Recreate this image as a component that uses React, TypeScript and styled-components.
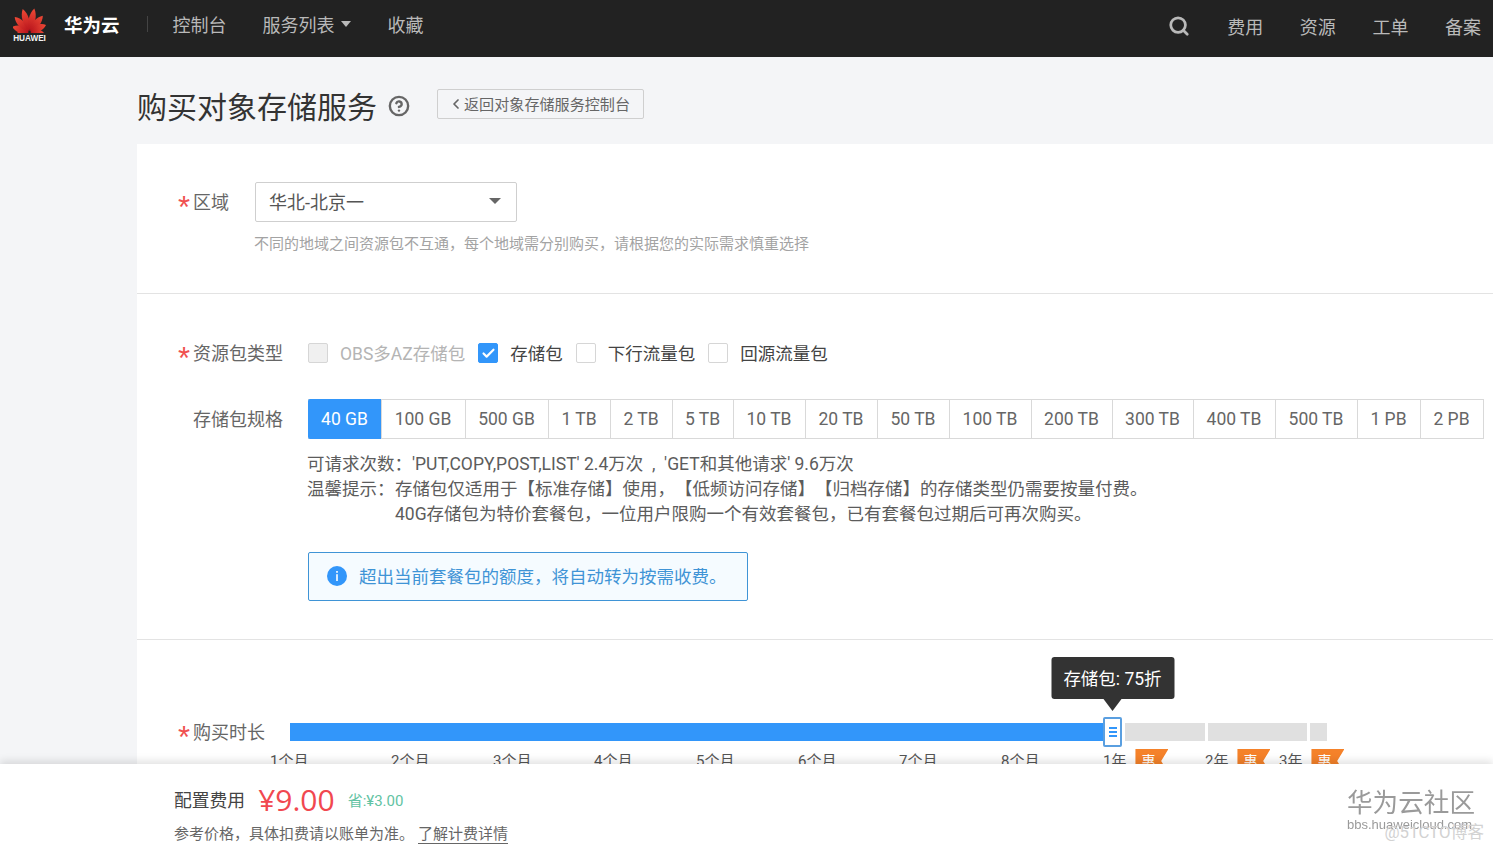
import React from 'react';
import styled, { createGlobalStyle } from 'styled-components';
import { Search, ChevronLeft, CircleHelp, Check } from 'lucide-react';

const GlobalStyle = createGlobalStyle`
    html, body {
        margin: 0;
        padding: 0;
        background: #f4f5f7;
        font-family: Roboto, "Noto Sans CJK SC", sans-serif;
        text-spacing-trim: space-all;
    }
    * {
        box-sizing: border-box;
    }
`;

const Page = styled.div`
    position: relative;
    display: flex;
    flex-direction: column;
    height: 100vh;
    overflow: hidden;
`;

const Header = styled.header`
    display: flex;
    flex: none;
    align-items: center;
    height: 57px;
    padding: 0 12px 10px 13px;
    background: #222222;
    color: #b9b9b9;
    font-size: 18px;
`;

const LogoBox = styled.div`
    display: flex;
    flex-direction: column;
    align-items: center;
    width: 33px;
    margin-top: 4px;
`;

const LogoText = styled.span`
    margin-top: 1px;
    color: #f2f2f2;
    font-family: "Liberation Sans", sans-serif;
    font-size: 8.2px;
    font-weight: 700;
    line-height: 10px;
`;

const Brand = styled.span`
    margin-left: 18px;
    color: #ffffff;
    font-size: 18.5px;
    font-weight: 700;
`;

const NavDivider = styled.span`
    width: 1px;
    height: 16px;
    margin: 0 25px 0 27px;
    background: #444444;
`;

const NavLink = styled.span<{ $gap?: number }>`
    display: flex;
    align-items: center;
    margin-right: ${(props) => props.$gap ?? 0}px;
    font-size: 18px;
`;

const Caret = styled.span`
    width: 0;
    height: 0;
    margin-left: 6px;
    border-top: 6px solid #b9b9b9;
    border-left: 5px solid transparent;
    border-right: 5px solid transparent;
`;

const HeaderRight = styled.div`
    display: flex;
    align-items: center;
    gap: 36.6px;
    margin-left: auto;
    margin-top: 4px;

    > svg {
        margin-right: 1px;
    }
`;

const TitleRow = styled.div`
    display: flex;
    flex: none;
    align-items: center;
    height: 87px;
    padding: 7px 0 0 137px;
`;

const Title = styled.h1`
    margin: 2px 0 0;
    color: #333333;
    font-size: 30px;
    font-weight: 400;
`;

const HelpIcon = styled.span`
    display: flex;
    margin: 4px 27px 0 11px;
    color: #666666;
`;

const BackButton = styled.div`
    display: flex;
    align-items: center;
    width: 207px;
    height: 30px;
    padding: 0 0 3px 10px;
    border: 1px solid #cfcfcf;
    border-radius: 2px;
    color: #666666;
    font-size: 15.1px;

    > svg {
        margin-top: 2px;
    }
`;

const Card = styled.main`
    flex: 1;
    margin-left: 137px;
    background: #ffffff;
`;

const Section = styled.section<{ $height: number; $top: number }>`
    height: ${(props) => props.$height}px;
    padding: ${(props) => props.$top}px 0 0 41px;
    border-bottom: 1px solid #e3e3e3;

    &:last-child {
        border-bottom: none;
    }
`;

const FormRow = styled.div<{ $mb?: number }>`
    display: flex;
    align-items: center;
    margin-bottom: ${(props) => props.$mb ?? 0}px;
`;

const FieldLabel = styled.div<{ $width: number }>`
    display: flex;
    flex: none;
    align-items: center;
    width: ${(props) => props.$width}px;
    height: 40px;
    padding-top: 2px;
    color: #666666;
    font-size: 18px;
    line-height: 40px;
`;

const Star = styled.span<{ $hidden?: boolean }>`
    flex: none;
    width: 15px;
    color: #f0514f;
    font-family: "Liberation Sans", sans-serif;
    font-size: 31px;
    line-height: 1;
    transform: translateY(4px);
    visibility: ${(props) => (props.$hidden ? 'hidden' : 'visible')};
`;

const Select = styled.div`
    display: flex;
    align-items: center;
    justify-content: space-between;
    width: 262px;
    height: 40px;
    padding: 0 15px 2px 13px;
    border: 1px solid #cfcfcf;
    border-radius: 2px;
    color: #555555;
    font-size: 18px;
`;

const SelectCaret = styled.span`
    width: 0;
    height: 0;
    border-top: 6px solid #666666;
    border-left: 6px solid transparent;
    border-right: 6px solid transparent;
`;

const Hint = styled.div`
    margin: 12px 0 0 76px;
    color: #a3a3a3;
    font-size: 15px;
    line-height: 20px;
`;

const CheckGroup = styled.div`
    display: flex;
    align-items: center;
`;

const CheckItem = styled.label<{ $disabled?: boolean }>`
    display: flex;
    align-items: center;
    gap: 12px;
    margin-right: 13px;
    color: ${(props) => (props.$disabled ? '#b4b4b4' : '#444444')};
    font-size: 17.5px;
    line-height: 20px;
`;

const CheckText = styled.span`
    margin-top: 2px;
`;

const CheckBox = styled.span<{ $checked?: boolean; $disabled?: boolean }>`
    display: flex;
    align-items: center;
    justify-content: center;
    width: 20px;
    height: 20px;
    border: 1px solid ${(props) => (props.$checked ? '#3296fa' : '#d6d6d6')};
    border-radius: 2px;
    background: ${(props) => (props.$checked ? '#3296fa' : props.$disabled ? '#f0f0f0' : '#ffffff')};
    color: #ffffff;
`;

const SpecGroup = styled.div`
    display: grid;
    grid-template-columns: 73px 84px 83px 62px 62px 61px 72px 72px 72px 82px 81px 81px 82px 82px 63px 63px;
    flex: none;
    height: 40px;
    border: 1px solid #d9d9d9;
    border-left: none;
`;

const SpecItem = styled.div<{ $active?: boolean }>`
    display: flex;
    align-items: center;
    justify-content: center;
    margin: ${(props) => (props.$active ? '-1px 0' : '0')};
    padding-right: ${(props) => (props.$active ? 0 : 1)}px;
    border-left: ${(props) => (props.$active ? 'none' : '1px solid #d9d9d9')};
    border-radius: ${(props) => (props.$active ? '2px 0 0 2px' : '0')};
    background: ${(props) => (props.$active ? '#3296fa' : '#ffffff')};
    color: ${(props) => (props.$active ? '#ffffff' : '#666666')};
    font-size: 17.5px;
`;

const InfoText = styled.div`
    margin: 13px 0 0 129px;
    color: #5c5c5c;
    font-size: 17.5px;
    line-height: 25px;
`;

const InfoLine = styled.div`
    display: flex;
    white-space: pre;
`;

const InfoTag = styled.span`
    flex: none;
    width: 88px;
`;

const Alert = styled.div`
    display: flex;
    align-items: center;
    gap: 12px;
    width: 440px;
    height: 49px;
    margin: 25px 0 0 130px;
    padding: 0 0 2px 18px;
    border: 1px solid #3f94d6;
    border-radius: 2px;
    background: #f5fbff;
    color: #3f94d6;
    font-size: 17.5px;
`;

const SliderRow = styled.div`
    display: flex;
    align-items: center;
    height: 30px;
`;

const SliderBar = styled.div<{ $width: number; $active?: boolean }>`
    width: ${(props) => props.$width}px;
    height: 18px;
    margin-right: ${(props) => (props.$active ? 0 : 3)}px;
    background: ${(props) => (props.$active ? '#3296fa' : '#e0e0e0')};
`;

const Handle = styled.div`
    position: relative;
    display: flex;
    flex-direction: column;
    align-items: center;
    justify-content: center;
    gap: 2.5px;
    width: 19px;
    height: 30px;
    margin-right: 3px;
    border: 2px solid #5a9fe0;
    border-radius: 2px;
    background: #ffffff;
`;

const HandleLine = styled.span`
    width: 8px;
    height: 1.5px;
    background: #3296fa;
`;

const Tooltip = styled.div`
    position: absolute;
    left: 50%;
    bottom: 46px;
    display: flex;
    align-items: center;
    justify-content: center;
    width: 123px;
    height: 42px;
    padding-bottom: 2px;
    transform: translateX(-50%);
    border-radius: 3px;
    background: #333333;
    color: #ffffff;
    font-size: 17.5px;
    white-space: nowrap;

    &::after {
        content: '';
        position: absolute;
        top: 100%;
        left: 50%;
        margin-left: -9px;
        border-top: 12px solid #333333;
        border-left: 9px solid transparent;
        border-right: 9px solid transparent;
    }
`;

const TickRow = styled.div`
    display: flex;
    align-items: flex-start;
    margin: -3px 0 0 92px;
`;

const Tick = styled.div<{ $width: number }>`
    display: flex;
    flex: none;
    width: ${(props) => props.$width}px;
    color: #555555;
    font-size: 15px;
    line-height: 24px;
`;

const SaleBadge = styled.span`
    flex: none;
    width: 33px;
    height: 24px;
    margin: 0 0 0 9px;
    padding-left: 6px;
    background: #f5822a;
    clip-path: polygon(0 0, 100% 0, 78% 50%, 100% 100%, 0 100%);
    color: #ffffff;
    font-size: 14px;
    line-height: 24px;
`;

const Footer = styled.footer`
    position: absolute;
    left: 0;
    right: 0;
    bottom: 0;
    height: 86px;
    padding: 16px 0 0 174px;
    background: #ffffff;
    box-shadow: 0 -3px 8px rgba(0, 0, 0, 0.12);
`;

const PriceRow = styled.div`
    display: flex;
    align-items: center;
    height: 38px;
`;

const PriceLabel = styled.span`
    color: #444444;
    font-size: 17.8px;
`;

const Price = styled.span`
    margin: 0 13px;
    color: #f1484f;
    font-family: "Open Sans", Roboto, sans-serif;
    font-size: 30px;
`;

const Saved = styled.span`
    color: #62c3a3;
    font-size: 15px;
`;

const FootNote = styled.div`
    margin-top: 6px;
    color: #666666;
    font-size: 15px;
    line-height: 20px;
`;

const FootLink = styled.span`
    margin-left: 4px;
    border-bottom: 1px solid #666666;
`;

const Watermark = styled.div`
    position: absolute;
    right: 18px;
    bottom: 18px;
    display: flex;
    flex-direction: column;
    color: #9a9a9a;
    filter: blur(0.4px);
`;

const WatermarkTitle = styled.span`
    font-size: 25.6px;
    line-height: 28px;
`;

const WatermarkUrl = styled.span`
    font-family: "Liberation Sans", sans-serif;
    font-size: 13px;
    line-height: 15px;
`;

const CtoMark = styled.span`
    position: absolute;
    right: 9px;
    bottom: 9px;
    color: #d2d2d2;
    font-size: 16.8px;
    line-height: 18px;
`;

const specs = ['40 GB', '100 GB', '500 GB', '1 TB', '2 TB', '5 TB', '10 TB', '20 TB', '50 TB', '100 TB', '200 TB', '300 TB', '400 TB', '500 TB', '1 PB', '2 PB'];
const months = ['1个月', '2个月', '3个月', '4个月', '5个月', '6个月', '7个月', '8个月'];
const monthWidths = [121, 102, 101, 102, 102, 101, 102, 102];
const petals = [
    { r: -100, l: 15 },
    { r: -70, l: 18 },
    { r: -42, l: 21 },
    { r: -14, l: 24 },
    { r: 14, l: 24 },
    { r: 42, l: 21 },
    { r: 70, l: 18 },
    { r: 100, l: 15 },
];

const HuaweiLogo = () => (
    <svg width="33" height="26" viewBox="-16.5 -25 33 26">
        <defs>
            <linearGradient id="petal" x1="0" y1="1" x2="0" y2="0">
                <stop offset="0" stopColor="#b8141c" />
                <stop offset="1" stopColor="#ee4a36" />
            </linearGradient>
        </defs>
        {petals.map((p) => (
            <path key={p.r} transform={`rotate(${p.r})`} fill="url(#petal)" d={`M0 -1 C-5.2 ${-p.l * 0.35} -5 ${-p.l * 0.75} -1 ${-p.l} C3.6 ${-p.l * 0.75} 4 ${-p.l * 0.35} 0 -1 Z`} />
        ))}
    </svg>
);

const InfoIcon = () => (
    <svg width="20" height="20" viewBox="0 0 20 20">
        <circle cx="10" cy="10" r="10" fill="#3296fa" />
        <rect x="9.2" y="5" width="1.6" height="1.8" fill="#ffffff" />
        <rect x="9.2" y="8.2" width="1.6" height="6.8" fill="#ffffff" />
    </svg>
);

export default function App() {
    return (
        <Page>
            <GlobalStyle />
            <Header>
                <LogoBox>
                    <HuaweiLogo />
                    <LogoText>HUAWEI</LogoText>
                </LogoBox>
                <Brand>华为云</Brand>
                <NavDivider />
                <NavLink $gap={36}>控制台</NavLink>
                <NavLink $gap={37}>
                    服务列表
                    <Caret />
                </NavLink>
                <NavLink>收藏</NavLink>
                <HeaderRight>
                    <Search size={22} strokeWidth={3} color="#b9b9b9" />
                    <NavLink>费用</NavLink>
                    <NavLink>资源</NavLink>
                    <NavLink>工单</NavLink>
                    <NavLink>备案</NavLink>
                </HeaderRight>
            </Header>
            <TitleRow>
                <Title>购买对象存储服务</Title>
                <HelpIcon>
                    <CircleHelp size={22} strokeWidth={2.6} />
                </HelpIcon>
                <BackButton>
                    <ChevronLeft size={16} strokeWidth={2.6} />
                    返回对象存储服务控制台
                </BackButton>
            </TitleRow>
            <Card>
                <Section $height={150} $top={38}>
                    <FormRow>
                        <FieldLabel $width={77}>
                            <Star>*</Star>
                            区域
                        </FieldLabel>
                        <Select>
                            华北-北京一
                            <SelectCaret />
                        </Select>
                    </FormRow>
                    <Hint>不同的地域之间资源包不互通，每个地域需分别购买，请根据您的实际需求慎重选择</Hint>
                </Section>
                <Section $height={346} $top={39}>
                    <FormRow $mb={26}>
                        <FieldLabel $width={130}>
                            <Star>*</Star>
                            资源包类型
                        </FieldLabel>
                        <CheckGroup>
                            <CheckItem $disabled>
                                <CheckBox $disabled />
                                <CheckText>OBS多AZ存储包</CheckText>
                            </CheckItem>
                            <CheckItem>
                                <CheckBox $checked>
                                    <Check size={15} strokeWidth={3.4} />
                                </CheckBox>
                                <CheckText>存储包</CheckText>
                            </CheckItem>
                            <CheckItem>
                                <CheckBox />
                                <CheckText>下行流量包</CheckText>
                            </CheckItem>
                            <CheckItem>
                                <CheckBox />
                                <CheckText>回源流量包</CheckText>
                            </CheckItem>
                        </CheckGroup>
                    </FormRow>
                    <FormRow>
                        <FieldLabel $width={130}>
                            <Star $hidden>*</Star>
                            存储包规格
                        </FieldLabel>
                        <SpecGroup>
                            {specs.map((spec, i) => (
                                <SpecItem key={spec} $active={i === 0}>
                                    {spec}
                                </SpecItem>
                            ))}
                        </SpecGroup>
                    </FormRow>
                    <InfoText>
                        <InfoLine>可请求次数：'PUT,COPY,POST,LIST' 2.4万次  ,  'GET和其他请求' 9.6万次</InfoLine>
                        <InfoLine>
                            <InfoTag>温馨提示：</InfoTag>
                            存储包仅适用于【标准存储】使用，【低频访问存储】【归档存储】的存储类型仍需要按量付费。
                        </InfoLine>
                        <InfoLine>
                            <InfoTag />
                            40G存储包为特价套餐包，一位用户限购一个有效套餐包，已有套餐包过期后可再次购买。
                        </InfoLine>
                    </InfoText>
                    <Alert>
                        <InfoIcon />
                        超出当前套餐包的额度，将自动转为按需收费。
                    </Alert>
                </Section>
                <Section $height={200} $top={72}>
                    <FormRow>
                        <FieldLabel $width={112}>
                            <Star>*</Star>
                            购买时长
                        </FieldLabel>
                        <SliderRow>
                            <SliderBar $active $width={813} />
                            <Handle>
                                <Tooltip>存储包: 75折</Tooltip>
                                <HandleLine />
                                <HandleLine />
                                <HandleLine />
                            </Handle>
                            <SliderBar $width={80} />
                            <SliderBar $width={99} />
                            <SliderBar $width={17} />
                        </SliderRow>
                    </FormRow>
                    <TickRow>
                        {months.map((m, i) => (
                            <Tick key={m} $width={monthWidths[i]}>
                                {m}
                            </Tick>
                        ))}
                        <Tick $width={102}>
                            1年
                            <SaleBadge>惠</SaleBadge>
                        </Tick>
                        <Tick $width={74}>
                            2年
                            <SaleBadge>惠</SaleBadge>
                        </Tick>
                        <Tick $width={74}>
                            3年
                            <SaleBadge>惠</SaleBadge>
                        </Tick>
                    </TickRow>
                </Section>
            </Card>
            <Footer>
                <PriceRow>
                    <PriceLabel>配置费用</PriceLabel>
                    <Price>¥9.00</Price>
                    <Saved>省:¥3.00</Saved>
                </PriceRow>
                <FootNote>
                    参考价格，具体扣费请以账单为准。
                    <FootLink>了解计费详情</FootLink>
                </FootNote>
                <Watermark>
                    <WatermarkTitle>华为云社区</WatermarkTitle>
                    <WatermarkUrl>bbs.huaweicloud.com</WatermarkUrl>
                </Watermark>
                <CtoMark>@51CTO博客</CtoMark>
            </Footer>
        </Page>
    );
}
